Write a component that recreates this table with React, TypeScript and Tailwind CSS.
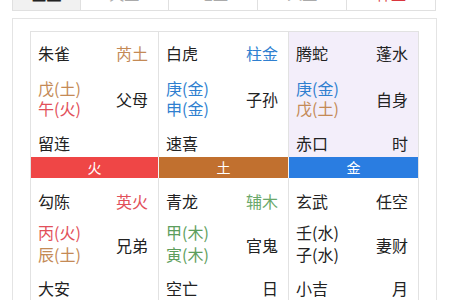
import React from "react";

type Seg = { t: string; c: string };
type Cell = {
  name: string;
  star: Seg;
  lines: Seg[];
  rel: string;
  door: string;
  mark?: string;
  bg?: string;
};

const top: Cell[] = [
  { name: "朱雀", star: { t: "芮土", c: "text-[#c48a56]" }, lines: [{ t: "戊(土)", c: "text-[#c48a56]" }, { t: "午(火)", c: "text-[#e2505a]" }], rel: "父母", door: "留连" },
  { name: "白虎", star: { t: "柱金", c: "text-[#2f7fd0]" }, lines: [{ t: "庚(金)", c: "text-[#2f7fd0]" }, { t: "申(金)", c: "text-[#2f7fd0]" }], rel: "子孙", door: "速喜" },
  { name: "腾蛇", star: { t: "蓬水", c: "text-[#222222]" }, lines: [{ t: "庚(金)", c: "text-[#2f7fd0]" }, { t: "戊(土)", c: "text-[#c48a56]" }], rel: "自身", door: "赤口", mark: "时", bg: "bg-[#f3eefa]" },
];
const bottom: Cell[] = [
  { name: "勾陈", star: { t: "英火", c: "text-[#e2505a]" }, lines: [{ t: "丙(火)", c: "text-[#e2505a]" }, { t: "辰(土)", c: "text-[#c48a56]" }], rel: "兄弟", door: "大安" },
  { name: "青龙", star: { t: "辅木", c: "text-[#6aa86a]" }, lines: [{ t: "甲(木)", c: "text-[#5d9e5d]" }, { t: "寅(木)", c: "text-[#5d9e5d]" }], rel: "官鬼", door: "空亡", mark: "日" },
  { name: "玄武", star: { t: "任空", c: "text-[#222222]" }, lines: [{ t: "壬(水)", c: "text-[#222222]" }, { t: "子(水)", c: "text-[#222222]" }], rel: "妻财", door: "小吉", mark: "月" },
];

const bars = [
  { t: "火", bg: "bg-[#ef4646]" },
  { t: "土", bg: "bg-[#c1702f]" },
  { t: "金", bg: "bg-[#2a7de1]" },
];

function GridCell({ c, last, bottomRow }: { c: Cell; last: boolean; bottomRow: boolean }) {
  return (
    <div
      className={`${c.bg ?? "bg-white"} ${last ? "" : "border-r border-[#e2e2e2]"} pl-[7px] pr-[10px] pb-[4px] flex flex-col text-[#222222] ${bottomRow ? "pt-[13px]" : "pt-[11px]"}`}
    >
      <div className="flex justify-between h-[20px] leading-[20px]">
        <span>{c.name}</span>
        <span className={c.star.c}>{c.star.t}</span>
      </div>
      <div className={`flex justify-between items-center ${bottomRow ? "mt-[10px]" : "mt-[15px]"}`}>
        <div className={`flex flex-col ${bottomRow ? "leading-[22px]" : "leading-[20px]"}`}>
          {c.lines.map((l, i) => (
            <span key={i} className={l.c}>{l.t}</span>
          ))}
        </div>
        <span className={bottomRow ? "pt-[3px]" : "pt-[2px]"}>{c.rel}</span>
      </div>
      <div className={`flex justify-between h-[20px] leading-[20px] ${bottomRow ? "mt-[13px]" : "mt-[15px]"}`}>
        <span>{c.door}</span>
        <span>{c.mark ?? ""}</span>
      </div>
    </div>
  );
}

export default function App() {
  const tabs = [
    { t: "全盘", cls: "bg-[#f1f1f1] text-[#222] w-[68px] font-bold" },
    { t: "天盘", cls: "text-[#aaa] w-[88px]" },
    { t: "地盘", cls: "text-[#aaa] w-[90px]" },
    { t: "人盘", cls: "text-[#aaa] w-[89px]" },
    { t: "神盘", cls: "text-[#d9363e] w-[89px]" },
  ];
  return (
    <div className="w-[450px] h-[300px] overflow-hidden bg-white text-[16px] font-['Noto_Sans_CJK_SC','Noto_Sans',sans-serif]">
      <div className="ml-[12px] w-[424px] h-[33px] mt-[-22px] flex border-l border-b border-[#e0e0e0]">
        {tabs.map((tb, i) => (
          <div
            key={i}
            className={`${tb.cls} h-full flex items-center justify-center text-[15px] border-r border-[#e0e0e0]`}
          >
            {tb.t}
          </div>
        ))}
      </div>
      <div className="ml-[12px] w-[425px] mt-[7px] h-[300px] border border-[#e4e4e4] bg-white pt-[12px] pl-[17px]">
        <div className="w-[389px] border border-[#e2e2e2]">
          <div className="grid grid-cols-[128px_130px_129px]">
            {top.map((c, i) => (
              <GridCell key={i} c={c} last={i === 2} bottomRow={false} />
            ))}
          </div>
          <div className="grid grid-cols-[128px_130px_129px] h-[21px]">
            {bars.map((b, i) => (
              <div key={i} className={`${b.bg} text-white text-[14px] flex items-center justify-center ${i < 2 ? "border-r border-[#f4f4f4]" : ""}`}>
                {b.t}
              </div>
            ))}
          </div>
          <div className="grid grid-cols-[128px_130px_129px]">
            {bottom.map((c, i) => (
              <GridCell key={i} c={c} last={i === 2} bottomRow={true} />
            ))}
          </div>
        </div>
      </div>
    </div>
  );
}
